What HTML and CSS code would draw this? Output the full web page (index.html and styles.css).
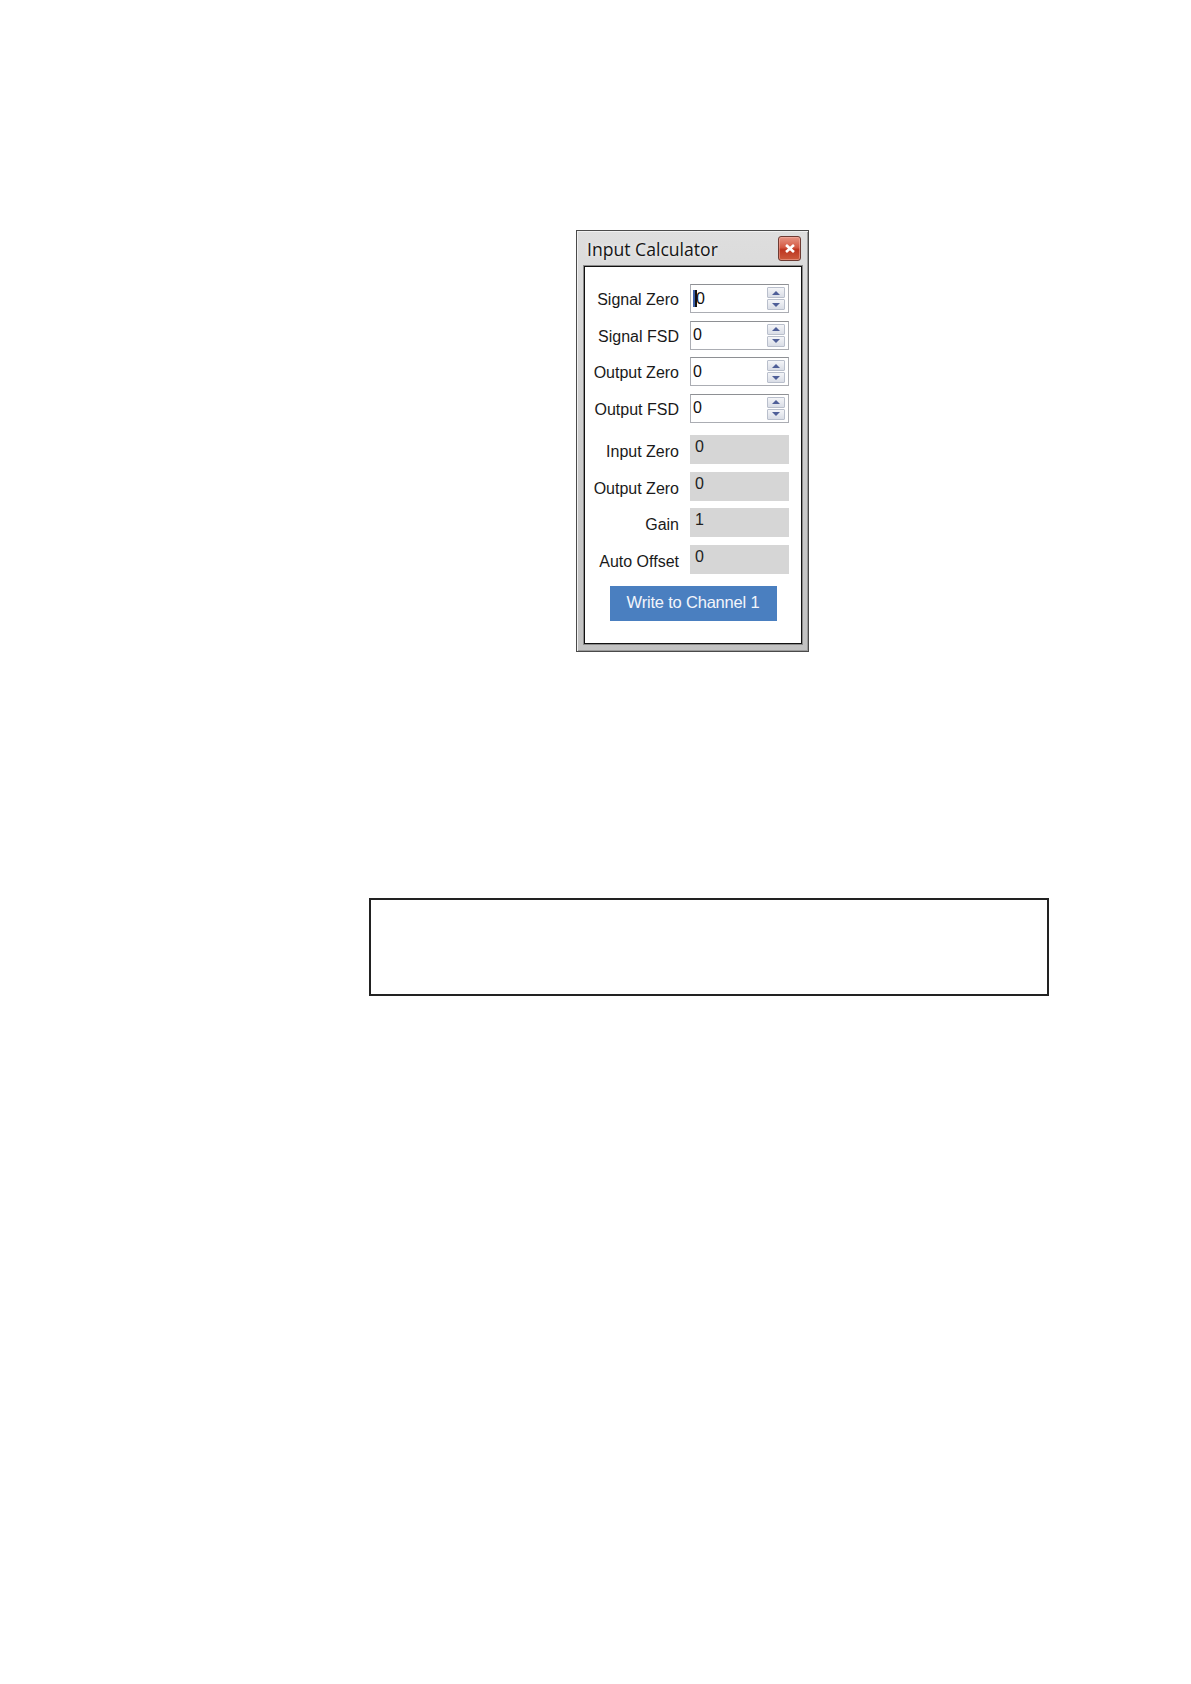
FILE: index.html
```html
<!DOCTYPE html>
<html>
<head>
<meta charset="utf-8">
<title>Input Calculator</title>
<link rel="stylesheet" href="styles.css">
</head>
<body>
<div class="page">
  <div class="window">
    <div class="titlebar">
      <span class="title">Input Calculator</span>
      <span class="close">
        <svg width="10" height="9" viewBox="0 0 10 9"><path d="M2 1.8 L8 7.2 M8 1.8 L2 7.2" stroke="#fff" stroke-width="2.6" stroke-linecap="square"/></svg>
      </span>
    </div>
    <div class="panel">
      <div class="row">
        <span class="label">Signal Zero</span>
        <span class="field"><span class="value"><span class="caret"></span>0</span><span class="spin"><span class="sb"><i class="up"></i></span><span class="sb"><i class="down"></i></span></span></span>
      </div>
      <div class="row">
        <span class="label">Signal FSD</span>
        <span class="field"><span class="value">0</span><span class="spin"><span class="sb"><i class="up"></i></span><span class="sb"><i class="down"></i></span></span></span>
      </div>
      <div class="row">
        <span class="label">Output Zero</span>
        <span class="field"><span class="value">0</span><span class="spin"><span class="sb"><i class="up"></i></span><span class="sb"><i class="down"></i></span></span></span>
      </div>
      <div class="row">
        <span class="label">Output FSD</span>
        <span class="field"><span class="value">0</span><span class="spin"><span class="sb"><i class="up"></i></span><span class="sb"><i class="down"></i></span></span></span>
      </div>
      <div class="row sep">
        <span class="label low">Input Zero</span>
        <span class="ro">0</span>
      </div>
      <div class="row">
        <span class="label low">Output Zero</span>
        <span class="ro">0</span>
      </div>
      <div class="row">
        <span class="label low">Gain</span>
        <span class="ro">1</span>
      </div>
      <div class="row">
        <span class="label low">Auto Offset</span>
        <span class="ro">0</span>
      </div>
      <div class="btnrow">
        <span class="btn">Write to Channel 1</span>
      </div>
    </div>
  </div>
  <div class="box"></div>
</div>
</body>
</html>
```
FILE: styles.css
```css
html, body {
  margin: 0;
  padding: 0;
  background: #fff;
}
.page {
  padding-top: 230px;
  width: 1191px;
}
.window {
  margin-left: 576px;
  width: 233px;
  height: 422px;
  box-sizing: border-box;
  border: 1px solid #4a4a4a;
  background: linear-gradient(to bottom, #dedede, #cacaca 60%, #c2c2c2);
  box-shadow: inset 1px 1px 0 #f0f0f0, inset -1px -1px 0 #9a9a9a;
  padding: 0 6px 7px 7px;
  display: flex;
  flex-direction: column;
}
.titlebar {
  height: 35px;
  display: flex;
  align-items: center;
  justify-content: space-between;
  padding-left: 3px;
}
.title {
  font-family: "Open Sans", "Liberation Sans", sans-serif;
  font-size: 17.6px;
  color: #151515;
  text-shadow: 0 0 4px rgba(255,255,255,0.9);
  margin-top: 0;
}
.close {
  width: 23px;
  height: 25px;
  box-sizing: border-box;
  border: 1px solid #6e3b33;
  border-radius: 3px;
  background: linear-gradient(to bottom, #e69483 0%, #d45a44 45%, #bd3520 55%, #cc5a3c 100%);
  box-shadow: inset 0 0 0 1px rgba(255,190,180,0.45);
  display: flex;
  align-items: center;
  justify-content: center;
  margin-right: 1px;
}
.panel {
  flex: 1;
  background: #fff;
  border: 1px solid #111;
  box-shadow: 0 0 0 1px #8a8a8a;
  padding: 17px 12px 0 0;
}
.row {
  display: flex;
  align-items: center;
  height: 29px;
  margin-top: 7.5px;
}
.row:first-child {
  margin-top: 0;
}
.row.sep {
  margin-top: 12.5px;
}
.label {
  width: 94px;
  text-align: right;
  font-family: "Liberation Sans", Arial, sans-serif;
  font-size: 16px;
  color: #1a1a1a;
  margin-right: 11px;
  line-height: 18px;
  margin-top: 3px;
}
.label.low {
  margin-top: 5px;
}
.field {
  width: 99px;
  height: 29px;
  box-sizing: border-box;
  border: 1px solid #abadb3;
  border-top-color: #8e9094;
  background: #fff;
  display: flex;
  align-items: center;
  padding: 0 3px 0 2px;
}
.value {
  flex: 1;
  font-family: "Liberation Sans", Arial, sans-serif;
  font-size: 16px;
  color: #111;
  display: flex;
  align-items: center;
}
.caret {
  width: 2px;
  height: 17px;
  background: #111;
  box-shadow: -2px 0 0 #3c5fa8;
  margin-left: 2px;
  margin-right: -1px;
}
.spin {
  width: 18px;
  display: flex;
  flex-direction: column;
  gap: 1px;
}
.sb {
  height: 11px;
  box-sizing: border-box;
  border: 1px solid #b9bfcc;
  border-radius: 1px;
  background: linear-gradient(to bottom, #f4f5f8, #d9dde6);
  display: flex;
  align-items: center;
  justify-content: center;
}
.sb i {
  width: 0;
  height: 0;
  border-left: 4.5px solid transparent;
  border-right: 4.5px solid transparent;
}
.sb i.up {
  border-bottom: 4px solid #4f5f98;
}
.sb i.down {
  border-top: 4px solid #4f5f98;
}
.ro {
  width: 99px;
  height: 29px;
  box-sizing: border-box;
  background: #d6d6d6;
  font-family: "Liberation Sans", Arial, sans-serif;
  font-size: 16px;
  color: #222;
  padding: 3px 0 0 5px;
  line-height: 18px;
}
.btnrow {
  display: flex;
  justify-content: center;
  padding-left: 12px;
  margin-top: 12.5px;
}
.btn {
  width: 167px;
  height: 35px;
  box-sizing: border-box;
  background: #4a7fc0;
  color: #f2f5fb;
  font-family: "Liberation Sans", Arial, sans-serif;
  font-size: 16.5px;
  letter-spacing: -0.2px;
  display: flex;
  align-items: center;
  justify-content: center;
  padding-bottom: 2px;
}
.box {
  margin-top: 246px;
  margin-left: 369px;
  width: 680px;
  height: 98px;
  box-sizing: border-box;
  border: 2px solid #222;
}
```
